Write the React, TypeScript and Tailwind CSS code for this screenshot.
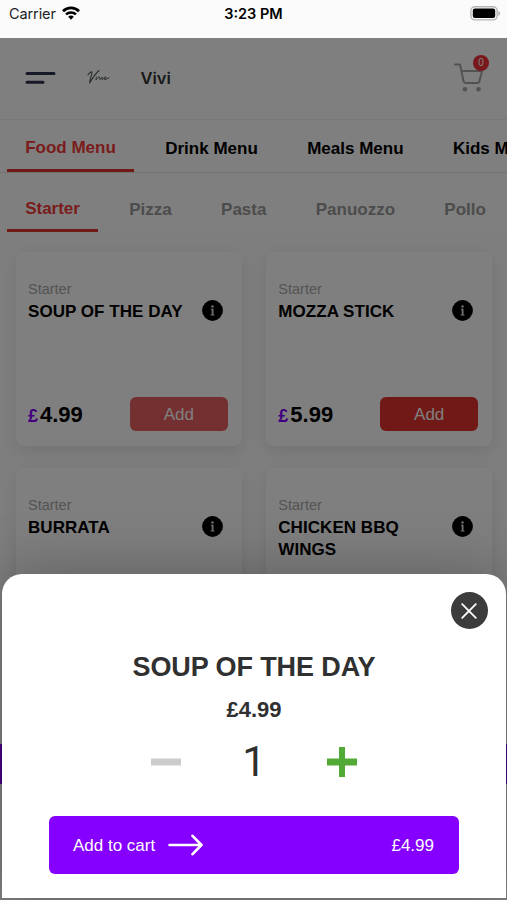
const menus = ['Food Menu', 'Drink Menu', 'Meals Menu', 'Kids Menu']
const categories = ['Starter', 'Pizza', 'Pasta', 'Panuozzo', 'Pollo']
const products = [
  { name: 'SOUP OF THE DAY', price: '4.99', pressed: true },
  { name: 'MOZZA STICK', price: '5.99', pressed: false },
  { name: 'BURRATA', price: '6.99', pressed: false },
  { name: 'CHICKEN BBQ WINGS', price: '6.99', pressed: false },
]

const InfoIcon = () => (
  <svg width="21" height="21" viewBox="0 0 21 21" className="shrink-0">
    <circle cx="10.5" cy="10.5" r="10.4" fill="#000" />
    <path d="M8.800 8.800h2.700v5.800h1v.9H8.700v-.9h1V9.700h-.9z" fill="#e5e5e5" />
    <circle cx="10.500" cy="6.500" r="1.200" fill="#e5e5e5" />
  </svg>
)

const StatusBar = () => (
  <div className="grid h-[38px] shrink-0 grid-cols-3 items-start bg-[#fbfbfb] px-2 pt-[4px] font-['Inter',sans-serif] text-[14.5px] leading-[20px] text-black">
    <div className="flex items-center gap-[6px] pl-px">
      <span className="tracking-[-0.1px] text-[#222]">Carrier</span>
      <svg width="18" height="14" viewBox="0 0 18 14" fill="none" stroke="#000" className="-mt-[2px]">
        <path d="M1 5.2C5.5.7 12.5.7 17 5.2" strokeWidth="2.7" />
        <path d="M4 8.4c2.8-2.7 7.2-2.7 10 0" strokeWidth="2.5" />
        <path d="M6.2 10.7c1.6-1.6 4-1.6 5.6 0L9 13.7z" fill="#000" stroke="none" />
      </svg>
    </div>
    <span className="text-center text-[14.5px] font-semibold">3:23 PM</span>
    <svg width="31" height="15" viewBox="0 0 31 15" className="mt-[2px] -mr-[2px] justify-self-end">
      <rect x=".9" y=".7" width="26.2" height="13.2" rx="4" fill="#fbfbfb" stroke="#b5b5b5" strokeWidth="1.4" />
      <rect x="2.8" y="2.6" width="22.4" height="9.4" rx="2" fill="#000" />
      <path d="M28.3 5v5c2.4-.9 2.4-4.1 0-5z" fill="#b5b5b5" />
    </svg>
  </div>
)

const Header = () => (
  <header className="flex h-[82px] shrink-0 items-center border-b border-[#f1f1f1] pr-[23px] pl-[25px]">
    <svg width="31" height="14" viewBox="0 0 31 14" stroke="#2e3050" strokeWidth="3" strokeLinecap="round" className="-mt-[2px]">
      <path d="M2 2.5h27M2 11.2h16" />
    </svg>
    <svg width="24" height="16" viewBox="0 0 24 16" fill="none" stroke="#4d5a5c" strokeLinecap="round" strokeLinejoin="round" className="ml-[31px] -mt-[4px]">
      <path d="M1 5.800C2.500 3.500 4.300 2.500 5 3 4.800 6 3 10 2.600 14 5 10 8.500 4.500 12 1.500" strokeWidth="1.100" />
      <path d="M9.500 8 8.800 10.800c1-.3 2.300-1.800 3-2.800M12.500 8l.4 2.600c1.200-.5 1.800-1.800 2.500-2.600l-.4 2.500c1 0 1.500-1 2.200-1.400M17.500 9.600c1.500.2 2.200-1.600 1.200-1.800-1.400 0-2.200 2.800-.5 2.800 1.300 0 2-1.600 3.800-1.800" strokeWidth=".9" />
    </svg>
    <span className="ml-[29.500px] font-['Inter',sans-serif] text-[16.500px] font-semibold text-[#333]">Vivi</span>
    <div className="relative ml-auto">
      <svg width="30" height="30" viewBox="0 0 30 30" fill="none" stroke="#a4a4a4" strokeWidth="2" strokeLinecap="round" strokeLinejoin="round" className="-mt-[2px]">
        <path d="M1 1.500h5l3.500 16.500c.3 1.500.8 2 2 2h11.500c1.500 0 2.200-.5 2.500-2L28 8H7.700" />
        <circle cx="11" cy="26.200" r="1.300" fill="#a4a4a4" />
        <circle cx="24.500" cy="26.200" r="1.300" fill="#a4a4a4" />
      </svg>
      <span className="absolute -top-[10px] -right-[5px] flex h-4 w-4 items-center justify-center rounded-full bg-[#f13038] text-[10px] text-white">0</span>
    </div>
  </header>
)

const ProductCard = ({ name, price, pressed }: (typeof products)[number]) => (
  <div className="flex h-[194px] flex-col rounded-lg bg-white pt-[27px] pr-[14px] pb-[15px] pl-3 shadow-[0_5px_16px_rgba(0,0,0,0.09)]">
    <p className="text-[14.5px] leading-[21px] text-[#a8a8a8]">Starter</p>
    <div className="flex items-start justify-between pr-[5px]">
      <h3 className="w-[162px] pt-px text-[17px] leading-[22px] font-bold tracking-[0.05px] text-black">{name}</h3>
      <InfoIcon />
    </div>
    <div className="mt-auto flex items-center justify-between">
      <p className="flex items-baseline text-[22px] font-bold text-black">
        <span className="mr-[2px] text-[18px] text-[#8500ff]">£</span>
        {price}
      </p>
      <button className={`h-[34px] w-[98px] rounded-md pt-[2px] text-[17px] text-white ${pressed ? 'bg-[#e86060]' : 'bg-[#e0322d]'}`}>Add</button>
    </div>
  </div>
)

const ItemSheet = () => (
  <section className="absolute inset-x-0 bottom-0 z-20 mr-[1px] ml-[2px] h-[326px] pb-[2px]">
    <div className="flex h-full flex-col items-center rounded-t-[20px] bg-white shadow-[0_-2px_60px_rgba(0,0,0,0.25)]">
      <button className="mt-[18px] mr-[18.500px] flex h-[37px] w-[37px] shrink-0 items-center justify-center self-end rounded-full bg-[#3c3c3c]">
        <svg width="16" height="16" viewBox="0 0 16 16" stroke="#fff" strokeWidth="1.800" strokeLinecap="round" className="-ml-px">
          <path d="m1.200 1.200 13.600 13.600m0-13.600L1.200 14.800" />
        </svg>
      </button>
      <h2 className="mt-[21px] text-[27px] leading-[34px] font-bold tracking-[-0.1px] text-[#303030]">SOUP OF THE DAY</h2>
      <p className="mt-[13px] text-[22px] leading-[26px] font-bold text-[#303030]">£4.99</p>
      <div className="mt-[15px] flex w-[206px] items-center justify-between">
        <svg width="30" height="30" viewBox="0 0 30 30" fill="#ccc"><path d="M0 11.500h30v7H0z" /></svg>
        <span className="font-['Roboto',sans-serif] text-[42px] leading-[48px] text-[#303030]">1</span>
        <svg width="30" height="30" viewBox="0 0 30 30" fill="#51a936"><path d="M12 0h6v11.500h12v7H18V30h-6V18.500H0v-7h12z" /></svg>
      </div>
      <button className="mt-[30px] flex h-[58px] w-[410px] shrink-0 items-center rounded-md bg-[#8500ff] px-6 text-[17px] text-white">
        <span className="pt-[2px]">Add to cart</span>
        <svg width="35" height="22" viewBox="0 0 35 22" fill="none" stroke="#fff" strokeWidth="2.600" strokeLinecap="round" strokeLinejoin="round" className="ml-[13px]">
          <path d="M1.500 11h32M24.500 1.800l9 9.200-9 9.200" />
        </svg>
        <span className="mr-px ml-auto pt-[2px]">£4.99</span>
      </button>
    </div>
  </section>
)

const App = () => {
  return (
    <div className="relative flex h-[900px] w-full flex-col overflow-hidden bg-white font-['Liberation_Sans',Arial,sans-serif]">
      <StatusBar />
      <div className="relative flex min-h-0 flex-1 flex-col overflow-hidden bg-white">
        <Header />
        <nav className="flex h-[53px] shrink-0 gap-[13px] border-b border-[#e3e3e3] pl-[7px] text-[17px] font-bold whitespace-nowrap">
          {menus.map((menu, i) => (
            <span key={menu} className={`px-[18.200px] ${i === 0 ? 'border-b-[3px] border-[#e0352d] pt-[15px] text-[#f23a38]' : 'pt-[16px] text-black'}`}>
              {menu}
            </span>
          ))}
        </nav>
        <nav className="flex h-[59px] shrink-0 gap-[13px] pl-[7px] text-[17px] font-bold whitespace-nowrap">
          {categories.map((category, i) => (
            <span key={category} className={`px-[18.150px] ${i === 0 ? 'border-b-[3px] border-[#e0352d] pt-[23px] text-[#f23a38]' : 'pt-[24px] text-[#999]'}`}>
              {category}
            </span>
          ))}
        </nav>
        <main className="grid flex-1 auto-rows-min grid-cols-2 gap-x-[24.400px] gap-y-[22px] bg-[#fcfcfc] pt-5 pr-[14.800px] pl-4">
          {products.map((product) => (
            <ProductCard key={product.name} {...product} />
          ))}
        </main>
        <div className="absolute inset-x-0 top-[706px] h-10 bg-[#8500ff]" />
        <div className="absolute inset-0 z-10 bg-black/50" />
      </div>
      <ItemSheet />
    </div>
  )
}

export default App
